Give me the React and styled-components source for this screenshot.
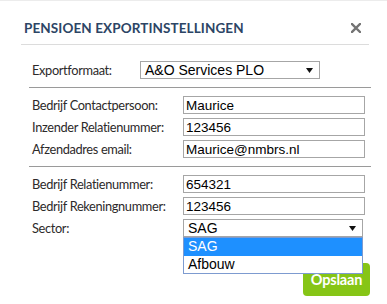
import React, { useState } from "react";
import styled, { createGlobalStyle } from "styled-components";

const GlobalStyle = createGlobalStyle`
	html, body {
		margin: 0;
		padding: 0;
		background: #fff;
	}
`;

const Modal = styled.div`
	width: 387px;
	height: 303px;
	border-top: 1px solid #ececec;
	font-family: Lato, "Open Sans", sans-serif;
`;

const Header = styled.div`
	display: flex;
	justify-content: space-between;
	align-items: center;
	margin: 0 18px 0 21px;
	padding: 19px 8px 8px 3px;
	border-bottom: 1px solid #dcdcdc;
`;

const Title = styled.h1`
	margin: 0;
	font-size: 13.5px;
	line-height: 16px;
	font-weight: 700;
	color: #2c4565;
	letter-spacing: 0.1px;
`;

const CloseButton = styled.button`
	display: flex;
	padding: 0;
	border: none;
	background: none;
	cursor: pointer;
`;

const Body = styled.div`
	margin: 0 16px 0 29px;
`;

const Section = styled.div`
	display: grid;
	grid-template-columns: ${(p) => p.labelWidth}px auto;
	row-gap: 4px;
	padding: ${(p) => p.top}px 0 8px 3px;
	border-bottom: ${(p) => (p.last ? "none" : "1px solid #9a9a9a")};
	position: relative;
`;

const Label = styled.label`
	display: flex;
	align-items: center;
	height: 18px;
	font-size: 12.8px;
	letter-spacing: -0.35px;
	color: #2d2a2a;
`;

const TextInput = styled.input`
	box-sizing: border-box;
	width: 182px;
	height: 18px;
	margin: 0;
	padding: 0 2px;
	border: 1px solid #a6a6a6;
	font-family: "Liberation Sans", Arial, sans-serif;
	font-size: 13.5px;
	color: #000;
	outline: none;
`;

const SelectBox = styled.div`
	position: relative;
	box-sizing: border-box;
	width: 180px;
	height: 18px;
	display: flex;
	align-items: center;
	justify-content: space-between;
	padding: 0 6px 0 4px;
	border: 1px solid #a6a6a6;
	font-family: "Liberation Sans", Arial, sans-serif;
	font-size: 14px;
	color: #000;
	cursor: default;
`;

const OptionList = styled.ul`
	position: absolute;
	top: 17px;
	left: -1px;
	z-index: 2;
	box-sizing: border-box;
	width: 180px;
	margin: 0;
	padding: 0;
	list-style: none;
	background: #fff;
	border: 1px solid #7d9bd0;
`;

const Option = styled.li`
	height: 17.5px;
	line-height: 17px;
	padding-left: 4px;
	font-size: 14px;
	background: ${(p) => (p.active ? "#1e90ff" : "#fff")};
	color: ${(p) => (p.active ? "#fff" : "#000")};
`;

const Footer = styled.div`
	display: flex;
	justify-content: flex-end;
	margin-top: 22px;
	grid-column: 1 / 3;
`;

const SaveButton = styled.button`
	width: 67px;
	height: 33px;
	margin-right: 1px;
	border: none;
	border-radius: 4px;
	background: #86c516;
	color: #fff;
	font-family: Lato, "Open Sans", sans-serif;
	font-size: 14.5px;
	font-weight: 700;
	letter-spacing: -0.2px;
	cursor: pointer;
`;

const Arrow = () => (
	<svg width="7" height="5" viewBox="0 0 7 5">
		<path d="M0 0 L7 0 L3.5 5 Z" fill="#111" />
	</svg>
);

const Select = ({ value, options, open }) => (
	<SelectBox>
		<span>{value}</span>
		<Arrow />
		{open && (
			<OptionList>
				{options.map((o) => (
					<Option key={o} active={o === value}>
						{o}
					</Option>
				))}
			</OptionList>
		)}
	</SelectBox>
);

const App = () => {
	const [contact, setContact] = useState("Maurice");
	const [inzender, setInzender] = useState("123456");
	const [email, setEmail] = useState("Maurice@nmbrs.nl");
	const [relatie, setRelatie] = useState("654321");
	const [rekening, setRekening] = useState("123456");

	return (
		<Modal>
			<GlobalStyle />
			<Header>
				<Title>PENSIOEN EXPORTINSTELLINGEN</Title>
				<CloseButton aria-label="Sluiten">
					<svg width="10" height="10" viewBox="0 0 10 10">
						<path
							d="M1 1 L9 9 M9 1 L1 9"
							stroke="#747474"
							strokeWidth="2.4"
							strokeLinecap="square"
						/>
					</svg>
				</CloseButton>
			</Header>
			<Body>
				<Section labelWidth={108} top={16}>
					<Label>Exportformaat:</Label>
					<Select value="A&O Services PLO" />
				</Section>
				<Section labelWidth={151} top={8}>
					<Label>Bedrijf Contactpersoon:</Label>
					<TextInput value={contact} onChange={(e) => setContact(e.target.value)} />
					<Label>Inzender Relatienummer:</Label>
					<TextInput value={inzender} onChange={(e) => setInzender(e.target.value)} />
					<Label>Afzendadres email:</Label>
					<TextInput value={email} onChange={(e) => setEmail(e.target.value)} />
				</Section>
				<Section labelWidth={151} top={8} last>
					<Label>Bedrijf Relatienummer:</Label>
					<TextInput value={relatie} onChange={(e) => setRelatie(e.target.value)} />
					<Label>Bedrijf Rekeningnummer:</Label>
					<TextInput value={rekening} onChange={(e) => setRekening(e.target.value)} />
					<Label>Sector:</Label>
					<Select value="SAG" options={["SAG", "Afbouw"]} open />
					<Footer>
						<SaveButton>Opslaan</SaveButton>
					</Footer>
				</Section>
			</Body>
		</Modal>
	);
};

export default App;
